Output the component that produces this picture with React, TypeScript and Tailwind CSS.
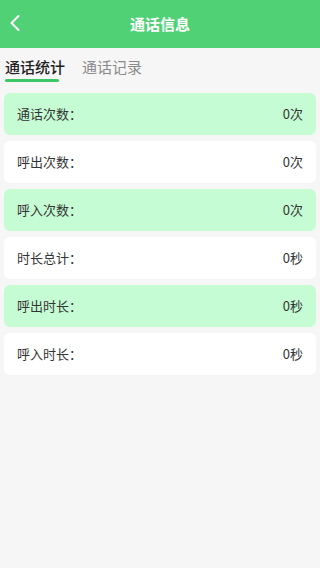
import React from "react";

const rows = [
  { label: "通话次数：", value: "0次", green: true },
  { label: "呼出次数：", value: "0次", green: false },
  { label: "呼入次数：", value: "0次", green: true },
  { label: "时长总计：", value: "0秒", green: false },
  { label: "呼出时长：", value: "0秒", green: true },
  { label: "呼入时长：", value: "0秒", green: false },
];

export default function App() {
  return (
    <div
      className="w-[320px] h-[568px] bg-[#f6f6f6] overflow-hidden"
      style={{ fontFamily: '"Noto Sans CJK SC", "Noto Sans", sans-serif' }}
    >
      <div className="h-[48px] bg-[#51d175] relative flex items-center justify-center">
        <svg
          className="absolute left-[9px] top-[14px]"
          width="12"
          height="18"
          viewBox="0 0 12 18"
          fill="none"
        >
          <path d="M9.5 2 L2.5 9 L9.5 16" stroke="white" strokeWidth="2" strokeLinecap="round" strokeLinejoin="round" />
        </svg>
        <span className="text-white text-[15px] font-bold leading-none -mt-[2px]">通话信息</span>
      </div>
      <div className="flex items-start h-[42px] pl-[5px] pt-[9px] gap-[17px]">
        <div className="flex flex-col">
          <span className="text-[15px] leading-[20px] font-medium text-[#222]">通话统计</span>
          <div className="mt-[2px] h-[3px] w-[54px] rounded-full bg-[#3dc764]" />
        </div>
        <span className="text-[15px] leading-[20px] text-[#8a8a8a]">通话记录</span>
      </div>
      <div className="flex flex-col gap-[6px] px-[4px] pt-[3px]">
        {rows.map((r) => (
          <div
            key={r.label}
            className={`h-[42px] rounded-[6px] flex items-center justify-between pl-[13px] pr-[13px] ${
              r.green ? "bg-[#c6fcd4]" : "bg-white"
            }`}
          >
            <span className="text-[13px] text-[#333]">{r.label}</span>
            <span className="text-[13px] text-[#333]">{r.value}</span>
          </div>
        ))}
      </div>
    </div>
  );
}
